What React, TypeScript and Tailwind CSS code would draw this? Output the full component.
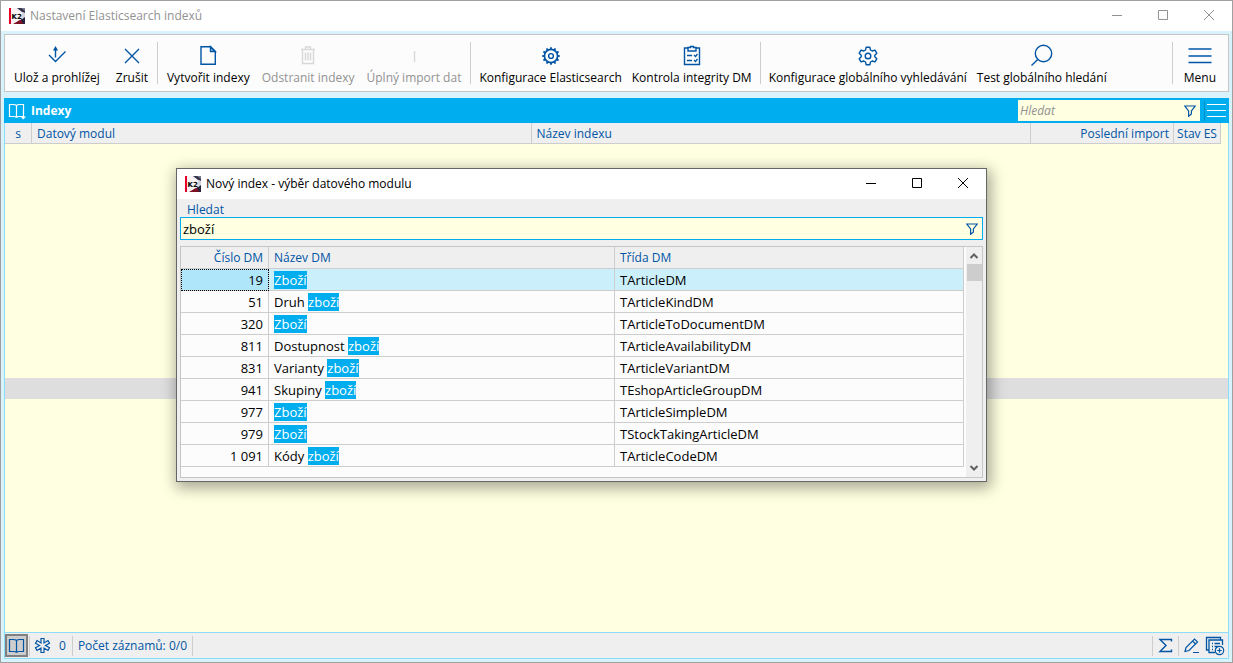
import type { ReactNode } from "react";

const modules = [
  { id: "19", prefix: "", match: "Zboží", className: "TArticleDM" },
  { id: "51", prefix: "Druh ", match: "zboží", className: "TArticleKindDM" },
  { id: "320", prefix: "", match: "Zboží", className: "TArticleToDocumentDM" },
  { id: "811", prefix: "Dostupnost ", match: "zboží", className: "TArticleAvailabilityDM" },
  { id: "831", prefix: "Varianty ", match: "zboží", className: "TArticleVariantDM" },
  { id: "941", prefix: "Skupiny ", match: "zboží", className: "TEshopArticleGroupDM" },
  { id: "977", prefix: "", match: "Zboží", className: "TArticleSimpleDM" },
  { id: "979", prefix: "", match: "Zboží", className: "TStockTakingArticleDM" },
  { id: "1 091", prefix: "Kódy ", match: "zboží", className: "TArticleCodeDM" },
];

type IconProps = { size?: number; children: ReactNode };

const Icon = ({ size = 24, children }: IconProps) => (
  <svg
    width={size}
    height={size}
    viewBox={`0 0 ${size} ${size}`}
    fill="none"
    stroke="currentColor"
    strokeWidth="1.4"
    className="shrink-0"
    aria-hidden="true"
  >
    {children}
  </svg>
);

const Logo = () => (
  <svg width="16" height="16" viewBox="0 0 16 16" className="shrink-0" aria-hidden="true">
    <rect width="16" height="16" fill="#f8f4f6" />
    <path d="M8 0H16V5L13 4Z" fill="#33344c" />
    <path d="M12 0L16 3V0Z" fill="#77798c" />
    <path d="M13 4L16 5V11L12 12Z" fill="#d5d5de" />
    <path d="M4 16L10 12.5L13 11L16 16Z" fill="#7d1022" />
    <path d="M12 12L16 9V16H14Z" fill="#25243c" />
    <rect width="2" height="16" fill="#e4002b" />
    <text x="2.5" y="10.5" fontFamily="'DejaVu Sans', sans-serif" fontSize="7" fontWeight="700" fill="#000">
      K2
    </text>
  </svg>
);

const BookIcon = ({ marker = false }: { marker?: boolean }) => (
  <Icon size={18}>
    <path d="M8.5 3.5V14.5M8.5 3.5C7.5 2.5 6.5 2.5 5 2.5H1.5V14.5H6C7.5 14.5 8 15 8.5 15.5M8.5 3.5C9.5 2.5 10.5 2.5 12 2.5H15.5V14.5H11C9.5 14.5 9 15 8.5 15.5" strokeWidth="1.2" />
    {marker && <path d="M12.5 14.5H18L15.2 17.5Z" fill="currentColor" stroke="none" />}
  </Icon>
);

const FilterIcon = () => (
  <Icon size={12}>
    <path d="M0.8 1H11.2L7.4 6V9L4.6 11.3V6Z" strokeWidth="1.2" />
  </Icon>
);

const MenuIcon = () => (
  <Icon>
    <path d="M0.5 5H23.5M0.5 12H23.5M0.5 18.5H23.5" />
  </Icon>
);

const toothAngles = [0, 30, 60, 90, 120, 150, 180, 210, 240, 270, 300, 330];

const ToothedGearIcon = () => (
  <Icon>
    <circle cx="12" cy="12" r="6.6" strokeWidth="1.7" />
    <circle cx="12" cy="12" r="2.4" />
    {toothAngles.map((angle) => (
      <path key={angle} d="M12 3.2V5.6" strokeWidth="1.8" transform={`rotate(${angle} 12 12)`} />
    ))}
  </Icon>
);

type ToolButtonProps = { label: string; disabled?: boolean; children: ReactNode };

const ToolButton = ({ label, disabled, children }: ToolButtonProps) => (
  <button
    disabled={disabled}
    className="group flex flex-col items-center pt-[2px] text-[#0055a5] disabled:text-[#d8d8d8]"
  >
    {children}
    <span className="mt-[2px] whitespace-nowrap leading-4 text-black group-disabled:text-[#929292]">
      {label}
    </span>
  </button>
);

const Separator = () => <div className="mx-[3px] w-px self-stretch bg-[#cdcdcd]" />;

const WindowButtons = () => (
  <div className="flex">
    <button aria-label="Minimalizovat" className="flex h-[28px] w-[46px] items-center justify-center">
      <svg width="10" height="10" stroke="currentColor" fill="none"><path d="M0 5.5H10" /></svg>
    </button>
    <button aria-label="Maximalizovat" className="flex h-[28px] w-[46px] items-center justify-center">
      <svg width="10" height="10" stroke="currentColor" fill="none"><path d="M0.5 0.5H9.5V9.5H0.5Z" /></svg>
    </button>
    <button aria-label="Zavřít" className="flex h-[28px] w-[46px] items-center justify-center">
      <svg width="10" height="10" stroke="currentColor" fill="none"><path d="M0 0L10 10M10 0L0 10" /></svg>
    </button>
  </div>
);

const Toolbar = () => (
  <div className="mx-[3px] mt-[3px] flex h-[58px] border border-[#c6c6c6] bg-[#fcfcfc] px-[3px] py-[7px]">
    <div className="flex gap-4 px-[6px]">
      <ToolButton label="Ulož a prohlížej">
        <Icon>
          <path d="M10.5 13.5V4M4 11L10.5 17.5L20.5 7.5" />
          <path d="M8 6.5L10.5 2L13 6.5Z" fill="currentColor" stroke="none" />
        </Icon>
      </ToolButton>
      <ToolButton label="Zrušit">
        <Icon><path d="M5 5L19 19M19 5L5 19" /></Icon>
      </ToolButton>
    </div>
    <Separator />
    <div className="flex gap-3 px-[6px]">
      <ToolButton label="Vytvořit indexy">
        <Icon>
          <path d="M5 2.7H14.5L19.3 7.5V20.3H5Z" />
          <path d="M14.5 2.7V7.5H19.3Z" fill="currentColor" fillOpacity="0.3" />
        </Icon>
      </ToolButton>
      <ToolButton label="Odstranit indexy" disabled>
        <Icon><path d="M5 5.5H19M9.5 5V3H14.5V5M6.5 6V19.5H17.5V6M9.5 8.5V16.5M12 8.5V16.5M14.5 8.5V16.5" /></Icon>
      </ToolButton>
      <ToolButton label="Úplný import dat" disabled>
        <Icon><path d="M12.5 7V18" /></Icon>
      </ToolButton>
    </div>
    <Separator />
    <div className="flex gap-[10px] px-[5px]">
      <ToolButton label="Konfigurace Elasticsearch">
        <ToothedGearIcon />
      </ToolButton>
      <ToolButton label="Kontrola integrity DM">
        <Icon>
          <path d="M8 4H4.5V20.5H19.5V4H16M8 3.5H10.5V2.5H13.5V3.5H16V7H8Z" />
          <path d="M7 11.5H12M7 16.5H12M14 11L15.5 12.5L17.5 10M14 16L15.5 17.5L17.5 15" strokeWidth="1.3" />
        </Icon>
      </ToolButton>
    </div>
    <Separator />
    <div className="flex gap-[10px] px-[5px]">
      <ToolButton label="Konfigurace globálního vyhledávání">
        <Icon>
          <path d="M10.2 3.2H13.8L14.5 6L16.2 7L19 6.1L20.8 9.2L18.8 11.2V12.8L20.8 14.8L19 17.9L16.2 17L14.5 18L13.8 20.8H10.2L9.5 18L7.8 17L5 17.9L3.2 14.8L5.2 12.8V11.2L3.2 9.2L5 6.1L7.8 7L9.5 6Z" strokeLinejoin="round" />
          <circle cx="12" cy="12" r="2.8" />
        </Icon>
      </ToolButton>
      <ToolButton label="Test globálního hledání">
        <Icon><circle cx="13.5" cy="9.5" r="8.2" /><path d="M7.7 15.5L1.5 21.5" /></Icon>
      </ToolButton>
    </div>
    <div className="ml-auto flex gap-2 pr-[9px]">
      <Separator />
      <ToolButton label="Menu"><MenuIcon /></ToolButton>
    </div>
  </div>
);

const IndexTable = () => (
  <table className="w-full table-fixed border-separate border-spacing-0 text-[#0055a5]">
    <thead>
      <tr className="h-[21px] bg-[#efefef] text-left">
        <th className="w-[27px] border-r border-b border-[#cdcdcd] px-0 pt-[2px] pb-0 text-center font-normal">s</th>
        <th className="border-r border-b border-[#cdcdcd] px-[5px] pt-[2px] pb-0 font-normal">Datový modul</th>
        <th className="border-r border-b border-[#cdcdcd] px-[5px] pt-[2px] pb-0 font-normal">Název indexu</th>
        <th className="w-[143px] border-r border-b border-[#cdcdcd] px-1 pt-[2px] pb-0 text-right font-normal">Poslední import</th>
        <th className="w-[47px] border-r border-b border-[#cdcdcd] px-0 pt-[2px] pb-0 text-center font-normal">Stav ES</th>
        <td className="w-[7px] bg-[#ffffe1] p-0" />
      </tr>
    </thead>
  </table>
);

const StatusBar = () => (
  <div className="flex h-[25px] items-center bg-[#efefef] text-[#0055a5]">
    <button aria-label="Kniha" className="flex h-[23px] w-[23px] items-center justify-center border-2 border-[#808080] bg-[#cdcdcd]">
      <BookIcon />
    </button>
    <div className="ml-px h-5 w-px bg-[#cdcdcd]" />
    <button className="flex items-center gap-2 px-1">
      <Icon size={17}>
        <path d="M7 1.5H10V6L14 3.6L15.5 6.2L11.5 8.5L15.5 10.8L14 13.4L10 11V15.5H7V11L3 13.4L1.5 10.8L5.5 8.5L1.5 6.2L3 3.6L7 6Z" strokeWidth="1.2" />
      </Icon>
      0
    </button>
    <div className="ml-[2px] h-5 w-px bg-[#cdcdcd]" />
    <span className="px-[5px]">Počet záznamů: 0/0</span>
    <div className="h-5 w-px bg-[#cdcdcd]" />
    <div className="ml-auto flex items-center">
      <div className="h-5 w-px bg-[#cdcdcd]" />
      <button aria-label="Součet" className="px-1">
        <Icon size={17}><path d="M14.5 4.5V2.5H3L9 8.5L3 14.5H14.5V12.5" /></Icon>
      </button>
      <div className="h-5 w-px bg-[#cdcdcd]" />
      <button aria-label="Upravit" className="px-1">
        <Icon size={17}><path d="M2 14.5L3 10.5L11.5 2L14.5 5L6 13.5ZM9.5 4L12.5 7M10 15.5H16" strokeWidth="1.2" /></Icon>
      </button>
      <button aria-label="Přidat záznam" className="pr-[3px] pl-px">
        <Icon size={20}>
          <path d="M3.5 14H1.5V1.5H15.5V3.5M10 16.5H4V4H17.5V9M7 7.5H8M9.5 7.5H15M7 10.5H8M9.5 10.5H13M7 13.5H8" strokeWidth="1.3" />
          <circle cx="14.5" cy="14.5" r="4.2" fill="#efefef" strokeWidth="1.2" />
          <path d="M14.5 12.2V16.8M12.2 14.5H16.8" strokeWidth="1.2" />
        </Icon>
      </button>
    </div>
  </div>
);

const ScrollBar = () => (
  <div className="flex w-4 flex-col items-center bg-[#efefef]">
    <svg width="16" height="17" fill="none" stroke="#606060" strokeWidth="2"><path d="M4.5 11L8 7.5L11.5 11" /></svg>
    <div className="h-[17px] w-[15px] bg-[#cdcdcd]" />
    <svg className="mt-auto" width="16" height="17" fill="none" stroke="#606060" strokeWidth="2"><path d="M4.5 6L8 9.5L11.5 6" /></svg>
  </div>
);

const ModuleDialog = () => (
  <div
    role="dialog"
    aria-labelledby="dialog-title"
    className="absolute top-[167px] left-[175px] w-[811px] border border-[#666] bg-[#efefef] shadow-[2px_4px_14px_2px_rgba(0,0,0,0.35)]"
  >
    <div className="flex h-[30px] items-start justify-between bg-white pl-2">
      <div className="flex h-[29px] items-center gap-[5px]">
        <Logo />
        <h2 id="dialog-title">Nový index - výběr datového modulu</h2>
      </div>
      <WindowButtons />
    </div>
    <div className="px-[3px] pt-[3px] pb-[3px]">
      <label htmlFor="module-search" className="block h-[15px] px-[7px] leading-4 text-[#0055a5]">
        Hledat
      </label>
      <div className="flex h-[23px] items-center border border-[#00adef] bg-[#ffffe1] pr-1 text-[#0055a5]">
        <input
          id="module-search"
          defaultValue="zboží"
          className="min-w-0 flex-1 px-[2px] text-[13px] text-black outline-none"
        />
        <FilterIcon />
      </div>
      <div className="mt-[6px] flex border border-[#c6c6c6] bg-[#fcfcfc]">
        <div className="flex-1 pb-[10px]">
          <table className="w-full table-fixed border-separate border-spacing-0">
            <thead>
              <tr className="h-[22px] bg-[#efefef] text-left text-[#0055a5]">
                <th className="w-[88px] border-r border-b border-[#cdcdcd] px-[5px] py-0 text-right font-normal">Číslo DM</th>
                <th className="w-[346px] border-r border-b border-[#cdcdcd] px-[5px] py-0 font-normal">Název DM</th>
                <th className="border-r border-b border-[#cdcdcd] px-[5px] py-0 font-normal">Třída DM</th>
              </tr>
            </thead>
            <tbody className="text-[13px]">
              {modules.map((module, index) => (
                <tr key={module.id} className="h-[22px] first:bg-[#cbeffb]">
                  <td
                    className={
                      index === 0
                        ? "border-r border-b border-[#cdcdcd] bg-[#b0e6fa] px-[5px] py-0 text-right outline-1 -outline-offset-1 outline-dotted outline-black"
                        : "border-r border-b border-[#cdcdcd] px-[5px] py-0 text-right"
                    }
                  >
                    {module.id}
                  </td>
                  <td className="border-r border-b border-[#cdcdcd] px-[5px] py-0">
                    {module.prefix}
                    <mark className="bg-[#00adef] text-white">{module.match}</mark>
                  </td>
                  <td className="border-r border-b border-[#cdcdcd] px-[5px] py-0">{module.className}</td>
                </tr>
              ))}
            </tbody>
          </table>
        </div>
        <div className="ml-[2px] flex">
          <ScrollBar />
        </div>
      </div>
    </div>
  </div>
);

const App = () => {
  return (
    <div className="relative flex min-h-screen flex-col border border-[#a0a0a0] bg-[#d9f3fd] font-['Open_Sans',sans-serif] text-[12px] leading-4">
      <header className="flex h-[30px] items-start justify-between bg-white pl-2 text-[#929292]">
        <div className="flex h-[29px] items-center gap-[5px]">
          <Logo />
          <h1>Nastavení Elasticsearch indexů</h1>
        </div>
        <WindowButtons />
      </header>
      <Toolbar />
      <main className="mx-[3px] mt-[6px] mb-[3px] flex flex-1 flex-col">
        <div className="flex h-[25px] items-center bg-[#00adef] pr-[3px] pl-1 text-white">
          <BookIcon marker />
          <h2 className="ml-[5px] flex-1 font-bold">Indexy</h2>
          <div className="flex h-[21px] w-[182px] items-center bg-[#ffffe1] pr-1 text-[#0055a5]">
            <input
              aria-label="Hledat"
              placeholder="Hledat"
              className="min-w-0 flex-1 px-[2px] italic outline-none placeholder:text-[#929292]"
            />
            <FilterIcon />
          </div>
          <div className="mr-[2px] ml-1 h-5 w-px bg-[#0090c8]" />
          <button aria-label="Nabídka">
            <svg width="19" height="13" stroke="currentColor" fill="none"><path d="M0 0.5H19M0 6.5H19M0 12.5H19" /></svg>
          </button>
        </div>
        <div className="flex flex-1 flex-col border border-t-0 border-[#8cdcfa] bg-[#ffffe1]">
          <IndexTable />
          <div className="flex flex-1 items-center border-b border-[#8cdcfa]">
            <div className="h-[21px] w-full bg-[#dedede]" />
          </div>
          <StatusBar />
        </div>
      </main>
      <ModuleDialog />
    </div>
  );
};

export default App;
